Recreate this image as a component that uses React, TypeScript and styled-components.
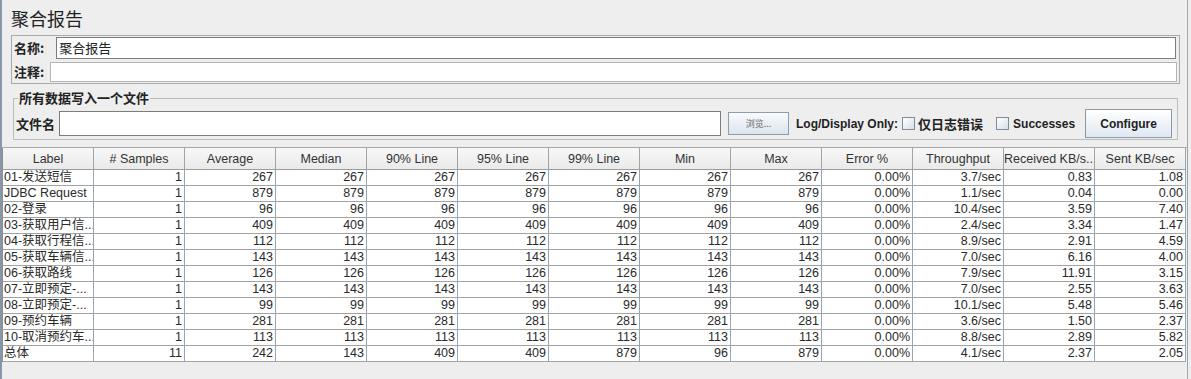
import React from 'react';
import styled, { createGlobalStyle } from 'styled-components';

const Global = createGlobalStyle`
  html, body { margin: 0; padding: 0; background: #eeeeee; }
  body { font-family: "Liberation Sans", "Noto Sans CJK SC", sans-serif; color: #222; }
`;

const Page = styled.div`
  width: 1188px;
  height: 379px;
  box-sizing: border-box;
  border-left: 2px solid #8797a8;
  border-right: 1px solid #9aa6b2;
  display: flex;
  flex-direction: column;
  overflow: hidden;
`;

const Title = styled.div`
  height: 35px;
  box-sizing: border-box;
  padding: 6px 0 0 9px;
  font-size: 18px;
  line-height: 24px;
  font-family: "Noto Sans CJK SC", sans-serif;
`;

const NamePanel = styled.div`
  margin-left: 9px;
  width: 1169px;
  box-sizing: border-box;
  border: 1px solid #a9a9a9;
  padding: 1px 0 1px 2px;
  display: grid;
  grid-template-columns: auto 1fr;
  row-gap: 3px;
  align-items: center;
`;

const FieldLabel = styled.span`
  font-family: "Noto Sans CJK SC", sans-serif;
  font-weight: bold;
  font-size: 13px;
  line-height: 16px;
  white-space: nowrap;
`;

const TextBox = styled.div<{ $w?: number; $h: number; $dark?: boolean; $ml?: number }>`
  box-sizing: border-box;
  flex: none;
  height: ${p => p.$h}px;
  ${p => (p.$w ? `width: ${p.$w}px;` : '')}
  margin-left: ${p => p.$ml ?? 0}px;
  background: #fff;
  border: 1px solid ${p => (p.$dark ? '#7c7c7c' : '#b4b4b4')};
  font-family: "Noto Sans CJK SC", sans-serif;
  font-size: 13px;
  line-height: ${p => p.$h - 2}px;
  padding-left: 2px;
`;

const Group = styled.fieldset`
  margin: 7px 0 0 11px;
  width: 1165px;
  box-sizing: border-box;
  border: 1px solid #bcbcbc;
  padding: 0 0 1px 2px;
  min-width: 0;
`;

const Legend = styled.legend`
  font-family: "Noto Sans CJK SC", sans-serif;
  font-weight: bold;
  font-size: 13px;
  line-height: 14px;
  padding: 0 1px;
  margin-left: 2px;
`;

const FileRow = styled.div`
  margin-top: 4px;
  height: 29px;
  display: flex;
  align-items: center;
`;

const Spacer = styled.span<{ $w: number }>`
  display: inline-block;
  width: ${p => p.$w}px;
  flex: none;
`;

const BrowseButton = styled.div`
  box-sizing: border-box;
  flex: none;
  width: 61px;
  height: 23px;
  border: 1px solid #8f9caa;
  background: linear-gradient(#f9fbfd, #dbe4ee);
  font-family: "Noto Sans CJK SC", sans-serif;
  font-size: 9px;
  color: #666;
  display: flex;
  align-items: center;
  justify-content: center;
`;

const BoldText = styled.span`
  flex: none;
  font-weight: bold;
  font-size: 12px;
  white-space: nowrap;
  color: #222;
`;

const CjkBold = styled(BoldText)`
  font-family: "Noto Sans CJK SC", sans-serif;
  font-size: 13px;
`;

const CheckBox = styled.span`
  box-sizing: border-box;
  width: 13px;
  height: 13px;
  border: 1px solid #7f8b98;
  background: linear-gradient(135deg, #ffffff, #d6dee8);
  flex: none;
`;

const ConfigureButton = styled.div`
  box-sizing: border-box;
  flex: none;
  width: 87px;
  height: 29px;
  border: 1px solid #8e98a4;
  background: linear-gradient(#ffffff, #dfe8f2);
  font-weight: bold;
  font-size: 12px;
  display: flex;
  align-items: center;
  justify-content: center;
`;

const TableWrap = styled.div`
  margin-top: 7px;
  flex: 1;
  border-top: 1px solid #a8a8a8;
`;

const Table = styled.table`
  width: 1183px;
  table-layout: fixed;
  border-collapse: separate;
  border-spacing: 0;
  background: #fff;
  border-left: 1px solid #8e8e8e;
  font-size: 12.5px;
`;

const HeadRow = styled.tr`
  height: 22px;
`;

const HeadCell = styled.th`
  padding: 0;
  font-weight: normal;
  color: #333;
  text-align: center;
  background: linear-gradient(#f7f7f7, #eaeaea);
  border-right: 1px solid #a3a3a3;
  border-bottom: 1px solid #9c9c9c;
  white-space: nowrap;
  overflow: hidden;
`;

const Row = styled.tr`
  height: 16px;
`;

const Cell = styled.td<{ $left?: boolean }>`
  padding: 0 2px 0 1px;
  line-height: 15px;
  color: #2a2a2a;
  text-align: ${p => (p.$left ? 'left' : 'right')};
  border-right: 1px solid #96a4b4;
  border-bottom: 1px solid #a3a3a3;
  white-space: nowrap;
  overflow: hidden;
`;

const headers = [
  'Label', '# Samples', 'Average', 'Median', '90% Line', '95% Line', '99% Line',
  'Min', 'Max', 'Error %', 'Throughput', 'Received KB/s...', 'Sent KB/sec',
];

const mk = (label: string, n: number, v: number, tp: string, rx: string, tx: string) =>
  [label, n, v, v, v, v, v, v, v, '0.00%', tp, rx, tx];

const rows: (string | number)[][] = [
  mk('01-发送短信', 1, 267, '3.7/sec', '0.83', '1.08'),
  mk('JDBC Request', 1, 879, '1.1/sec', '0.04', '0.00'),
  mk('02-登录', 1, 96, '10.4/sec', '3.59', '7.40'),
  mk('03-获取用户信...', 1, 409, '2.4/sec', '3.34', '1.47'),
  mk('04-获取行程信...', 1, 112, '8.9/sec', '2.91', '4.59'),
  mk('05-获取车辆信...', 1, 143, '7.0/sec', '6.16', '4.00'),
  mk('06-获取路线', 1, 126, '7.9/sec', '11.91', '3.15'),
  mk('07-立即预定-...', 1, 143, '7.0/sec', '2.55', '3.63'),
  mk('08-立即预定-...', 1, 99, '10.1/sec', '5.48', '5.46'),
  mk('09-预约车辆', 1, 281, '3.6/sec', '1.50', '2.37'),
  mk('10-取消预约车...', 1, 113, '8.8/sec', '2.89', '5.82'),
  ['总体', 11, 242, 143, 409, 409, 879, 96, 879, '0.00%', '4.1/sec', '2.37', '2.05'],
];

export default function App() {
  return (
    <>
      <Global />
      <Page>
        <Title>聚合报告</Title>
        <NamePanel>
          <FieldLabel>名称:</FieldLabel>
          <TextBox $h={22} $dark $ml={12} $w={1120}>聚合报告</TextBox>
          <FieldLabel>注释:</FieldLabel>
          <TextBox $h={20} $ml={6} $w={1127} />
        </NamePanel>
        <Group>
          <Legend>所有数据写入一个文件</Legend>
          <FileRow>
            <CjkBold>文件名</CjkBold>
            <Spacer $w={4} />
            <TextBox $h={25} $w={662} $dark />
            <Spacer $w={7} />
            <BrowseButton>浏览...</BrowseButton>
            <Spacer $w={7} />
            <BoldText>Log/Display Only:</BoldText>
            <Spacer $w={4} />
            <CheckBox />
            <Spacer $w={3} />
            <CjkBold>仅日志错误</CjkBold>
            <Spacer $w={13} />
            <CheckBox />
            <Spacer $w={4} />
            <BoldText>Successes</BoldText>
            <Spacer $w={10} />
            <ConfigureButton>Configure</ConfigureButton>
          </FileRow>
        </Group>
        <TableWrap>
          <Table>
            <colgroup>
              {headers.map(h => <col key={h} style={{ width: 91 }} />)}
            </colgroup>
            <thead>
              <HeadRow>
                {headers.map(h => <HeadCell key={h}>{h}</HeadCell>)}
              </HeadRow>
            </thead>
            <tbody>
              {rows.map((r, i) => (
                <Row key={i}>
                  {r.map((c, j) => (
                    <Cell key={j} $left={j === 0}>{c}</Cell>
                  ))}
                </Row>
              ))}
            </tbody>
          </Table>
        </TableWrap>
      </Page>
    </>
  );
}
